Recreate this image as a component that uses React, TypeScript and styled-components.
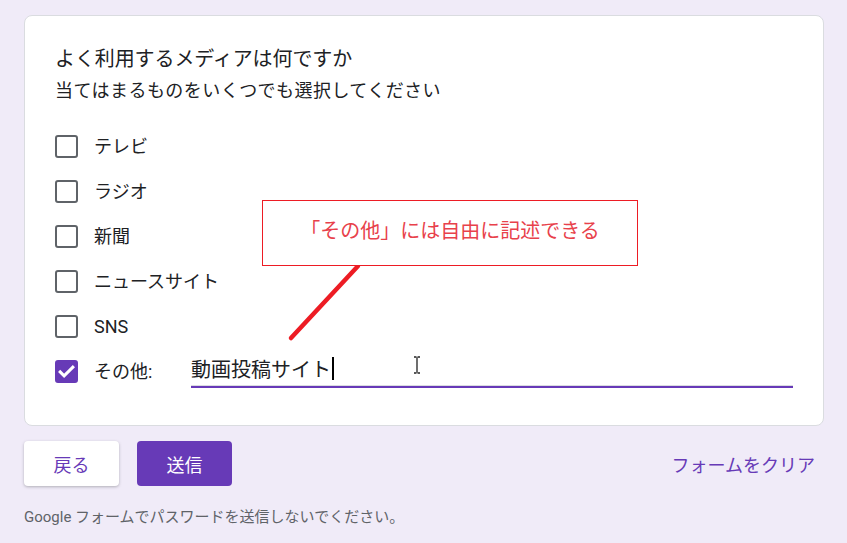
import styled, { createGlobalStyle } from "styled-components";

const GlobalStyle = createGlobalStyle`
  html, body {
    margin: 0;
    padding: 0;
    background: #f0ebf8;
  }
  body {
    font-family: Roboto, "Noto Sans CJK JP", sans-serif;
    color: #202124;
  }
`;

const Page = styled.div`
  width: 847px;
  height: 543px;
  padding: 15px 0 0 24px;
  box-sizing: border-box;
  overflow: hidden;
`;

const Card = styled.div`
  position: relative;
  width: 800px;
  box-sizing: border-box;
  background: #fff;
  border: 1px solid #dadce0;
  border-radius: 8px;
  padding: 31px 30px 31px 30px;
`;

const Title = styled.div`
  font-size: 20px;
  line-height: 24px;
  letter-spacing: -0.1px;
`;

const Subtitle = styled.div`
  margin-top: 8px;
  font-size: 18px;
  line-height: 24px;
  letter-spacing: 0.45px;
`;

const Options = styled.div`
  margin-top: 21px;
  display: flex;
  flex-direction: column;
`;

const Row = styled.div`
  height: 45px;
  display: flex;
  align-items: center;
`;

const Box = styled.div<{ $checked?: boolean }>`
  width: 23px;
  height: 23px;
  box-sizing: border-box;
  flex: none;
  border-radius: 3px;
  border: 2px solid ${(p) => (p.$checked ? "#673ab7" : "#5f6368")};
  background: ${(p) => (p.$checked ? "#673ab7" : "transparent")};
  display: flex;
  align-items: center;
  justify-content: center;
`;

const Label = styled.span<{ $width?: number }>`
  margin-left: 16px;
  font-size: 18px;
  line-height: 24px;
  width: ${(p) => (p.$width ? `${p.$width}px` : "auto")};
  flex: none;
`;

const Field = styled.div`
  position: relative;
  flex: 1;
  height: 36px;
  margin-bottom: 4px;
  box-sizing: border-box;
  border-bottom: 2px solid #673ab7;
  display: flex;
  align-items: center;
  font-size: 20px;
  color: #202124;

  &::after {
    content: "";
    position: absolute;
    left: 0;
    right: 0;
    bottom: 0;
    height: 1px;
    background: #dadce0;
  }
`;

const Caret = styled.span`
  display: inline-block;
  width: 2px;
  height: 23px;
  margin-left: 1px;
  background: #000;
`;

const IBeam = styled.svg`
  position: absolute;
  left: 222px;
  top: 4px;
`;

const Callout = styled.div`
  position: absolute;
  left: 237px;
  top: 184px;
  width: 376px;
  height: 66px;
  box-sizing: border-box;
  background: #fff;
  border: 1px solid #ed1c24;
  display: flex;
  align-items: center;
  justify-content: center;
  color: #e8414b;
  font-family: "Noto Sans CJK JP", sans-serif;
  font-size: 20px;
  padding-bottom: 8px;
`;

const Pointer = styled.svg`
  position: absolute;
  left: 260px;
  top: 244px;
`;

const Actions = styled.div`
  margin-top: 15px;
  width: 800px;
  display: flex;
  align-items: center;
`;

const Button = styled.button<{ $primary?: boolean }>`
  width: 95px;
  height: 45px;
  margin-right: 18px;
  border: none;
  border-radius: 4px;
  font-family: Roboto, "Noto Sans CJK JP", sans-serif;
  font-size: 18px;
  background: ${(p) => (p.$primary ? "#673ab7" : "#fff")};
  color: ${(p) => (p.$primary ? "#fff" : "#673ab7")};
  box-shadow: ${(p) =>
    p.$primary ? "none" : "0 1px 3px rgba(60, 64, 67, 0.35)"};
  cursor: pointer;
`;

const ClearButton = styled.button`
  margin-left: auto;
  margin-right: 9px;
  background: none;
  border: none;
  padding: 0;
  font-family: Roboto, "Noto Sans CJK JP", sans-serif;
  font-size: 18px;
  color: #673ab7;
`;

const Footer = styled.div`
  margin-top: 21px;
  font-size: 15px;
  line-height: 20px;
  color: #5f6368;
`;

const options = ["テレビ", "ラジオ", "新聞", "ニュースサイト", "SNS"];

function Check() {
  return (
    <svg width="19" height="19" viewBox="0 0 24 24">
      <path d="M4 12.5l5 5L20 6.5" fill="none" stroke="#fff" strokeWidth="3.8" strokeLinecap="square" />
    </svg>
  );
}

export default function App() {
  return (
    <Page>
      <GlobalStyle />
      <Card>
        <Title>よく利用するメディアは何ですか</Title>
        <Subtitle>当てはまるものをいくつでも選択してください</Subtitle>
        <Options>
          {options.map((o) => (
            <Row key={o}>
              <Box />
              <Label>{o}</Label>
            </Row>
          ))}
          <Row>
            <Box $checked>
              <Check />
            </Box>
            <Label $width={97}>その他:</Label>
            <Field>
              動画投稿サイト
              <Caret />
              <IBeam width="8" height="18" viewBox="0 0 8 18">
                <path d="M1 1h2.5M4.5 1H7M4 1.5v15M1 17h2.5M4.5 17H7" stroke="#222" strokeWidth="1.3" fill="none" />
              </IBeam>
            </Field>
          </Row>
        </Options>
        <Pointer width="80" height="85" viewBox="0 0 80 85">
          <line x1="73" y1="6" x2="6" y2="78" stroke="#ed1c24" strokeWidth="4.5" strokeLinecap="round" />
        </Pointer>
        <Callout>「その他」には自由に記述できる</Callout>
      </Card>
      <Actions>
        <Button>戻る</Button>
        <Button $primary>送信</Button>
        <ClearButton>フォームをクリア</ClearButton>
      </Actions>
      <Footer>Google フォームでパスワードを送信しないでください。</Footer>
    </Page>
  );
}
